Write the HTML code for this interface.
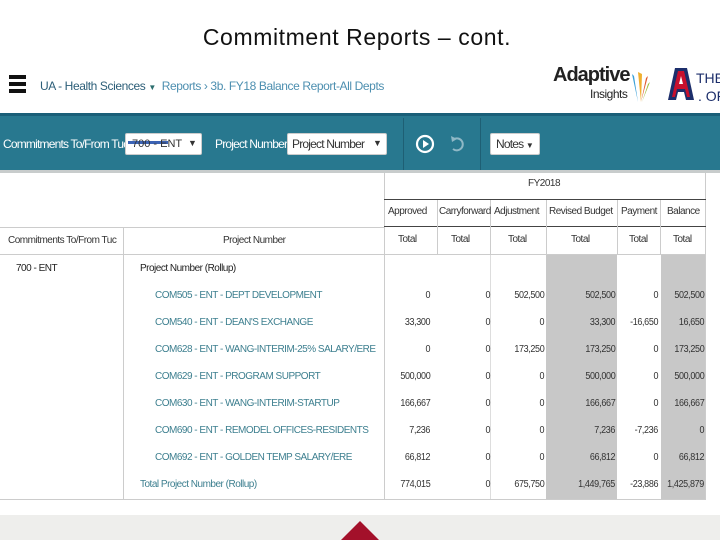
<!DOCTYPE html>
<html><head><meta charset="utf-8"><style>
*{margin:0;padding:0;box-sizing:border-box}
body{width:720px;height:540px;overflow:hidden;background:#fff;font-family:"Liberation Sans",sans-serif;position:relative}
.a{position:absolute;white-space:nowrap}
.n{font-size:10px;color:#333;letter-spacing:-0.4px;transform:scaleX(.9)}
.l{font-size:10px;color:#3d7f8f;letter-spacing:-0.5px}
.t{font-size:10px;color:#333;letter-spacing:-0.5px}
</style></head><body>
<div class="a" style="left:0;top:24px;width:720px;text-align:center;font-size:23px;color:#111;padding-right:6px;letter-spacing:0.6px">Commitment Reports – cont.</div>
<div class="a" style="left:9px;top:75px;width:17px;height:4px;background:#111"></div>
<div class="a" style="left:9px;top:82px;width:17px;height:4px;background:#111"></div>
<div class="a" style="left:9px;top:89px;width:17px;height:4px;background:#111"></div>
<div class="a" style="left:40px;top:79px;font-size:12px;color:#2c5e78;letter-spacing:-0.4px">UA - Health Sciences <span style="font-size:8px;color:#2c6e6e">▼</span> &nbsp;<span style="color:#4d8fb0">Reports › 3b. FY18 Balance Report-All Depts</span></div>
<div class="a" style="left:553px;top:64px;font-size:20px;font-weight:bold;color:#222;letter-spacing:-1px">Adaptive</div>
<div class="a" style="left:590px;top:87px;font-size:12px;color:#222;letter-spacing:-0.5px">Insights</div>
<svg class="a" style="left:628px;top:68px" width="24" height="36"><path d="M4 6 L10 34 L6 8Z" fill="#3aa0d8"/><path d="M10 4 L13 34 L14 6Z" fill="#f0b030"/><path d="M20 8 L13 34 L18 10Z" fill="#e05a30"/><path d="M22 14 L14 34 L20 16Z" fill="#a0c040"/></svg>
<svg class="a" style="left:666px;top:66px" width="30" height="38"><path d="M9 2H21L28 34H20L18 26H12L10 34H2Z" fill="#1c2e6b"/><path d="M12 5H18L24 31H21L19 23H11L9 31H6Z" fill="#c8102e"/><path d="M13 18H17L15 10Z" fill="#fff"/></svg>
<div class="a" style="left:696px;top:70px;font-size:14px;color:#1c2e6b">THE</div>
<div class="a" style="left:698px;top:88px;font-size:14px;color:#1c2e6b">. OF</div>
<div class="a" style="left:0;top:113px;width:720px;height:3px;background:#1a5f78"></div>
<div class="a" style="left:0;top:116px;width:720px;height:54px;background:#28788f"></div>
<div class="a" style="left:403px;top:118px;width:1px;height:52px;background:#1e5f74"></div>
<div class="a" style="left:480px;top:118px;width:1px;height:52px;background:#1e5f74"></div>
<div class="a" style="left:3px;top:137px;font-size:12px;color:#fff;letter-spacing:-0.8px">Commitments To/From Tuc</div>
<div class="a" style="left:125px;top:133px;width:77px;height:22px;background:#fff;border-radius:2px;border:1px solid #ccc"></div>
<div class="a" style="left:128px;top:141px;width:40px;height:3px;background:#3b63b5"></div>
<div class="a" style="left:132px;top:138px;font-size:11px;color:#333">700 - ENT</div>
<div class="a" style="left:188px;top:138px;font-size:9px;color:#333">▼</div>
<div class="a" style="left:215px;top:137px;font-size:12px;color:#fff;letter-spacing:-0.8px">Project Number</div>
<div class="a" style="left:287px;top:133px;width:100px;height:22px;background:#fff;border-radius:2px;border:1px solid #ccc"></div>
<div class="a" style="left:292px;top:137px;font-size:12px;color:#333;letter-spacing:-0.8px">Project Number</div>
<div class="a" style="left:373px;top:138px;font-size:9px;color:#333">▼</div>
<svg class="a" style="left:415px;top:134px" width="20" height="20"><circle cx="10" cy="10" r="8" fill="none" stroke="#fff" stroke-width="2.2"/><path d="M8 6L14 10L8 14Z" fill="#fff"/></svg>
<svg class="a" style="left:448px;top:134px" width="20" height="20"><path d="M6 5 A6 6 0 1 1 5 15" fill="none" stroke="#8fb8c6" stroke-width="2"/><path d="M3 2L9 5L4 8Z" fill="#8fb8c6"/></svg>
<div class="a" style="left:490px;top:133px;width:50px;height:22px;background:#fff;border-radius:2px;border:1px solid #ccc"></div>
<div class="a" style="left:496px;top:137px;font-size:12px;color:#333;letter-spacing:-0.8px">Notes <span style="font-size:8px">▼</span></div>
<div class="a" style="left:0;top:170px;width:720px;height:3px;background:#c8cccc"></div>
<div class="a" style="left:546px;top:255px;width:71px;height:245px;background:#c8c8c8"></div>
<div class="a" style="left:661px;top:255px;width:44px;height:245px;background:#c8c8c8"></div>
<div class="a" style="left:384px;top:173px;width:1px;height:327px;background:#ccc"></div>
<div class="a" style="left:705px;top:173px;width:1px;height:327px;background:#ccc"></div>
<div class="a" style="left:123px;top:227px;width:1px;height:273px;background:#ccc"></div>
<div class="a" style="left:490px;top:227px;width:1px;height:273px;background:#ddd"></div>
<div class="a" style="left:384px;top:199px;width:322px;height:1px;background:#444"></div>
<div class="a" style="left:384px;top:226px;width:322px;height:1px;background:#444"></div>
<div class="a" style="left:0;top:227px;width:384px;height:1px;background:#ccc"></div>
<div class="a" style="left:0;top:254px;width:706px;height:1px;background:#ccc"></div>
<div class="a" style="left:0;top:499px;width:706px;height:1px;background:#ccc"></div>
<div class="a" style="left:437px;top:200px;width:1px;height:55px;background:#ccc"></div>
<div class="a" style="left:490px;top:200px;width:1px;height:55px;background:#ccc"></div>
<div class="a" style="left:546px;top:200px;width:1px;height:55px;background:#ccc"></div>
<div class="a" style="left:617px;top:200px;width:1px;height:55px;background:#ccc"></div>
<div class="a" style="left:660px;top:200px;width:1px;height:55px;background:#ccc"></div>
<div class="a t" style="left:528px;top:178px">FY2018</div>
<div class="a t" style="left:388px;top:206px">Approved</div>
<div class="a t" style="left:439px;top:206px">Carryforward</div>
<div class="a t" style="left:494px;top:206px">Adjustment</div>
<div class="a t" style="left:549px;top:206px">Revised Budget</div>
<div class="a t" style="left:621px;top:206px">Payment</div>
<div class="a t" style="left:667px;top:206px">Balance</div>
<div class="a t" style="left:8px;top:235px">Commitments To/From Tuc</div>
<div class="a t" style="left:223px;top:235px">Project Number</div>
<div class="a t" style="left:398px;top:234px">Total</div>
<div class="a t" style="left:451px;top:234px">Total</div>
<div class="a t" style="left:508px;top:234px">Total</div>
<div class="a t" style="left:571px;top:234px">Total</div>
<div class="a t" style="left:629px;top:234px">Total</div>
<div class="a t" style="left:673px;top:234px">Total</div>
<div class="a t" style="left:16px;top:263px;color:#222">700 - ENT</div>
<div class="a t" style="left:140px;top:263px;color:#222">Project Number (Rollup)</div>
<div id="rows"></div>
<script>
var d=[["COM505 - ENT - DEPT DEVELOPMENT","0","0","502,500","502,500","0","502,500"],
["COM540 - ENT - DEAN'S EXCHANGE","33,300","0","0","33,300","-16,650","16,650"],
["COM628 - ENT - WANG-INTERIM-25% SALARY/ERE","0","0","173,250","173,250","0","173,250"],
["COM629 - ENT - PROGRAM SUPPORT","500,000","0","0","500,000","0","500,000"],
["COM630 - ENT - WANG-INTERIM-STARTUP","166,667","0","0","166,667","0","166,667"],
["COM690 - ENT - REMODEL OFFICES-RESIDENTS","7,236","0","0","7,236","-7,236","0"],
["COM692 - ENT - GOLDEN TEMP SALARY/ERE","66,812","0","0","66,812","0","66,812"],
["Total Project Number (Rollup)","774,015","0","675,750","1,449,765","-23,886","1,425,879"]];
var R=[430,490,544,615,658,704],h="";
d.forEach(function(r,i){var y=290+i*27;
h+='<div class="a l" style="left:'+(i==7?140:155)+'px;top:'+y+'px">'+r[0]+'</div>';
for(var j=1;j<7;j++)h+='<div class="a n" style="right:'+(720-R[j-1])+'px;top:'+y+'px;transform-origin:right">'+r[j]+'</div>';});
document.getElementById('rows').innerHTML=h;
</script>
<div class="a" style="left:0;top:515px;width:720px;height:25px;background:#eeeeec"></div>
<svg class="a" style="left:340px;top:520px" width="40" height="20"><path d="M20 1L39 20H1Z" fill="#a3102a"/></svg>
</body></html>
